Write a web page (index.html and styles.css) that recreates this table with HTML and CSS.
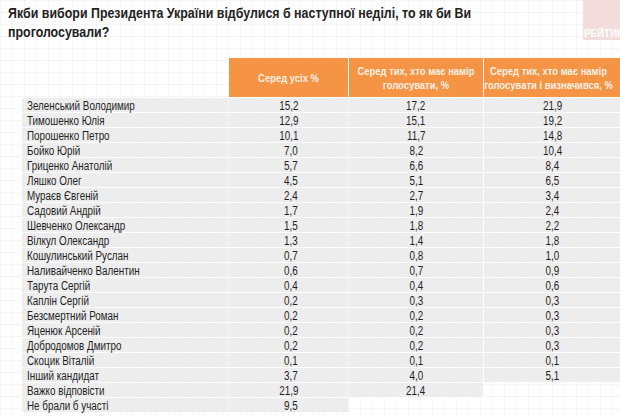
FILE: index.html
```html
<!DOCTYPE html>
<html lang="uk">
<head>
<meta charset="utf-8">
<link rel="stylesheet" href="styles.css">
</head>
<body>
<div class="page">
  <h1 class="title"><span class="title-text">Якби вибори Президента України відбулися б наступної неділі, то як би Ви<br>проголосували?</span></h1>
  <div class="logo"><span>РЕЙТИНГ</span></div>
  <table class="poll">
    <thead>
      <tr>
        <th class="blank"></th>
        <th class="h1"><span class="hd">Серед усіх %</span></th>
        <th class="h2"><span class="hd">Серед тих, хто має намір<br>голосувати, %</span></th>
        <th class="h3"><span class="hd">Серед тих, хто має намір<br>голосувати і визначився, %</span></th>
      </tr>
    </thead>
    <tbody>
      <tr><td class="name"><span>Зеленський Володимир</span></td><td class="c1"><span>15,2</span></td><td><span>17,2</span></td><td><span>21,9</span></td></tr>
      <tr><td class="name"><span>Тимошенко Юлія</span></td><td class="c1"><span>12,9</span></td><td><span>15,1</span></td><td><span>19,2</span></td></tr>
      <tr><td class="name"><span>Порошенко Петро</span></td><td class="c1"><span>10,1</span></td><td><span>11,7</span></td><td><span>14,8</span></td></tr>
      <tr><td class="name"><span>Бойко Юрій</span></td><td class="c1"><span>7,0</span></td><td><span>8,2</span></td><td><span>10,4</span></td></tr>
      <tr><td class="name"><span>Гриценко Анатолій</span></td><td class="c1"><span>5,7</span></td><td><span>6,6</span></td><td><span>8,4</span></td></tr>
      <tr><td class="name"><span>Ляшко Олег</span></td><td class="c1"><span>4,5</span></td><td><span>5,1</span></td><td><span>6,5</span></td></tr>
      <tr><td class="name"><span>Мураєв Євгеній</span></td><td class="c1"><span>2,4</span></td><td><span>2,7</span></td><td><span>3,4</span></td></tr>
      <tr><td class="name"><span>Садовий Андрій</span></td><td class="c1"><span>1,7</span></td><td><span>1,9</span></td><td><span>2,4</span></td></tr>
      <tr><td class="name"><span>Шевченко Олександр</span></td><td class="c1"><span>1,5</span></td><td><span>1,8</span></td><td><span>2,2</span></td></tr>
      <tr><td class="name"><span>Вілкул Олександр</span></td><td class="c1"><span>1,3</span></td><td><span>1,4</span></td><td><span>1,8</span></td></tr>
      <tr><td class="name"><span>Кошулинський Руслан</span></td><td class="c1"><span>0,7</span></td><td><span>0,8</span></td><td><span>1,0</span></td></tr>
      <tr><td class="name"><span>Наливайченко Валентин</span></td><td class="c1"><span>0,6</span></td><td><span>0,7</span></td><td><span>0,9</span></td></tr>
      <tr><td class="name"><span>Тарута Сергій</span></td><td class="c1"><span>0,4</span></td><td><span>0,4</span></td><td><span>0,6</span></td></tr>
      <tr><td class="name"><span>Каплін Сергій</span></td><td class="c1"><span>0,2</span></td><td><span>0,3</span></td><td><span>0,3</span></td></tr>
      <tr><td class="name"><span>Безсмертний Роман</span></td><td class="c1"><span>0,2</span></td><td><span>0,2</span></td><td><span>0,3</span></td></tr>
      <tr><td class="name"><span>Яценюк Арсеній</span></td><td class="c1"><span>0,2</span></td><td><span>0,2</span></td><td><span>0,3</span></td></tr>
      <tr><td class="name"><span>Добродомов Дмитро</span></td><td class="c1"><span>0,2</span></td><td><span>0,2</span></td><td><span>0,3</span></td></tr>
      <tr><td class="name"><span>Скоцик Віталій</span></td><td class="c1"><span>0,1</span></td><td><span>0,1</span></td><td><span>0,1</span></td></tr>
      <tr><td class="name"><span>Інший кандидат</span></td><td class="c1"><span>3,7</span></td><td><span>4,0</span></td><td><span>5,1</span></td></tr>
      <tr><td class="name"><span>Важко відповісти</span></td><td class="c1"><span>21,9</span></td><td><span>21,4</span></td><td class="empty"></td></tr>
      <tr><td class="name"><span>Не брали б участі</span></td><td class="c1"><span>9,5</span></td><td class="empty"></td><td class="empty"></td></tr>
    </tbody>
  </table>
</div>
</body>
</html>
```

FILE: styles.css
```css
html, body {
  margin: 0;
  padding: 0;
}
body {
  width: 620px;
  height: 417px;
  overflow: hidden;
  background-color: #ffffff;
  background-image:
    linear-gradient(to right, rgba(0,0,0,0.035) 1px, transparent 1px),
    linear-gradient(to bottom, rgba(0,0,0,0.035) 1px, transparent 1px);
  background-size: 12px 12px;
  font-family: "Liberation Sans", Arial, sans-serif;
  color: #1e1e1e;
}
.page {
  position: relative;
  width: 620px;
  height: 417px;
  overflow: hidden;
}
.title {
  margin: 3px 0 0 8px;
  width: 640px;
  font-size: 15.5px;
  line-height: 19px;
  font-weight: bold;
  color: #222;
  white-space: nowrap;
}
.title-text {
  display: inline-block;
  transform: scaleX(0.8);
  transform-origin: left center;
}
.logo {
  position: absolute;
  top: 0;
  left: 583px;
  width: 60px;
  height: 40px;
  background: #f2dcdc;
}
.logo span {
  position: absolute;
  left: 1px;
  top: 27px;
  font-size: 11.5px;
  font-weight: bold;
  color: #ffffff;
  white-space: nowrap;
  transform: scaleX(0.85);
  transform-origin: left center;
}
.poll {
  margin: 16px 0 0 21px;
  border-collapse: separate;
  border-spacing: 1px;
  table-layout: fixed;
  width: 601px;
}
.poll th, .poll td {
  padding: 0;
}
.poll th {
  height: 39px;
  background: #f49444;
  color: #fdf0e4;
  font-size: 11.5px;
  line-height: 14px;
  font-weight: bold;
  text-align: center;
  vertical-align: middle;
  white-space: nowrap;
}
.poll th.blank {
  width: 206px;
  background: transparent;
}
.poll th.h1 { width: 119px; }
.poll th.h2 { width: 134px; }
.poll th.h3 { width: 137px; }
.hd {
  display: block;
  margin: 0 -40px;
  transform: scaleX(0.82);
  transform-origin: center center;
}
.poll th.h3 .hd {
  margin: 0 -36px 0 -44px;
}
.poll td {
  height: 14px;
  background: #ededed;
  font-size: 12px;
  line-height: 14px;
  text-align: center;
  color: #1e1e1e;
  white-space: nowrap;
  vertical-align: bottom;
}
.poll td span {
  display: inline-block;
  transform: scaleX(0.82) translateY(1px);
  transform-origin: center center;
}
.poll td.name {
  text-align: left;
  padding-left: 5px;
}
.poll td.name span {
  transform-origin: left center;
}
.poll td.c1 {
  text-align: right;
  padding-right: 50px;
}
.poll td.c1 span {
  transform-origin: right center;
}
.poll td.empty {
  background: transparent;
}
```
